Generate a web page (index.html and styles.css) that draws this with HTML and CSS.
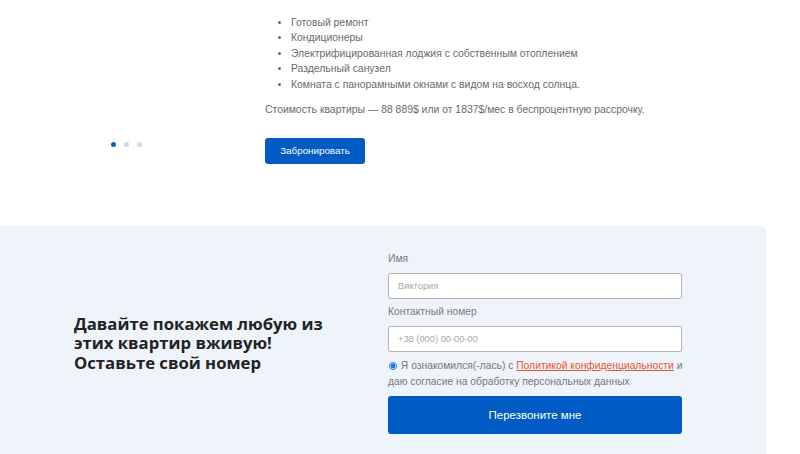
FILE: index.html
```html
<!DOCTYPE html>
<html lang="ru">
<head>
<meta charset="utf-8">
<title>Квартира</title>
<link rel="stylesheet" href="styles.css">
</head>
<body>
<section class="offer">
  <div class="slider-nav">
    <span class="dot active"></span>
    <span class="dot"></span>
    <span class="dot"></span>
  </div>
  <div class="offer-text">
    <p class="lead">Особенности планировки и дополнительные удобства:</p>
    <ul class="features">
      <li>Готовый ремонт</li>
      <li>Кондиционеры</li>
      <li>Электрифицированная лоджия с собственным отоплением</li>
      <li>Раздельный санузел</li>
      <li>Комната с панорамными окнами с видом на восход солнца.</li>
    </ul>
    <p class="price">Стоимость квартиры — 88 889$ или от 1837$/мес в беспроцентную рассрочку.</p>
    <button class="btn-book" type="button">Забронировать</button>
  </div>
</section>
<section class="callback">
  <h2 class="callback-title">Давайте покажем любую из этих квартир вживую! Оставьте свой номер</h2>
  <form class="callback-form">
    <label class="field-label" for="name">Имя</label>
    <input class="field" id="name" type="text" placeholder="Виктория">
    <label class="field-label" for="phone">Контактный номер</label>
    <input class="field" id="phone" type="text" placeholder="+38 (000) 00-00-00">
    <p class="consent"><input class="radio" type="radio" checked> Я ознакомился(-лась) с <a href="#">Политикой конфиденциальности</a> и даю согласие на обработку персональных данных</p>
    <button class="btn-call" type="button">Перезвоните мне</button>
  </form>
</section>
</body>
</html>
```
FILE: styles.css
```css
html, body {
  margin: 0;
  padding: 0;
  background: #fff;
  font-family: "Liberation Sans", Arial, sans-serif;
  overflow: hidden;
}

.offer {
  display: flex;
  height: 226px;
}

.slider-nav {
  width: 265px;
  box-sizing: border-box;
  padding-left: 111px;
  padding-top: 142px;
  display: flex;
  gap: 8px;
  align-items: flex-start;
}

.dot {
  width: 5px;
  height: 5px;
  border-radius: 50%;
  background: #c9d9ef;
}

.dot.active {
  background: #0b5fc6;
}

.offer-text {
  flex: 1;
  color: #6a6a6a;
  font-size: 10.4px;
  line-height: 15.5px;
}

.lead {
  margin: -13px 0 0;
}

.features {
  margin: 12px 0 0;
  padding-left: 26px;
}

.price {
  margin: 10px 0 0;
}

.btn-book {
  margin-top: 20px;
  width: 100px;
  height: 26px;
  border: 0;
  border-radius: 3px;
  background: #005bc4;
  color: #fff;
  font-family: "Liberation Sans", Arial, sans-serif;
  font-size: 9.8px;
  padding: 0;
}

.callback {
  margin-right: 34px;
  background: #eff4fb;
  border-top-right-radius: 6px;
  display: flex;
  align-items: center;
  padding: 26px 0 30px 74px;
}

.callback-title {
  flex: 0 0 314px;
  box-sizing: border-box;
  padding-right: 50px;
  margin: 0;
  font-family: "Open Sans", sans-serif;
  font-weight: 700;
  font-size: 16.7px;
  line-height: 19.5px;
  color: #222;
}

.callback-form {
  width: 294px;
  display: flex;
  flex-direction: column;
}

.field-label {
  font-size: 10.3px;
  line-height: 14px;
  color: #7a7a7a;
  margin-bottom: 7px;
}

.field {
  box-sizing: border-box;
  height: 26px;
  border: 1px solid #b4b4b4;
  border-radius: 2px;
  background: #fff;
  padding: 0 9px;
  font-family: "Liberation Sans", Arial, sans-serif;
  font-size: 9.3px;
  margin: 0 0 6px;
}

.field::placeholder {
  color: #a8a8a8;
}

.consent {
  margin: 0 -8px 0 0;
  font-size: 10.3px;
  line-height: 16px;
  color: #777;
}

.radio {
  width: 8px;
  height: 8px;
  margin: 0 1px 0 1px;
  vertical-align: -1px;
  accent-color: #1a73e8;
}

.consent a {
  color: #e8542e;
}

.btn-call {
  margin-top: 6px;
  height: 38px;
  border: 0;
  border-radius: 3px;
  background: #005bc4;
  color: #fff;
  font-family: "Liberation Sans", Arial, sans-serif;
  font-size: 11.5px;
}
```
